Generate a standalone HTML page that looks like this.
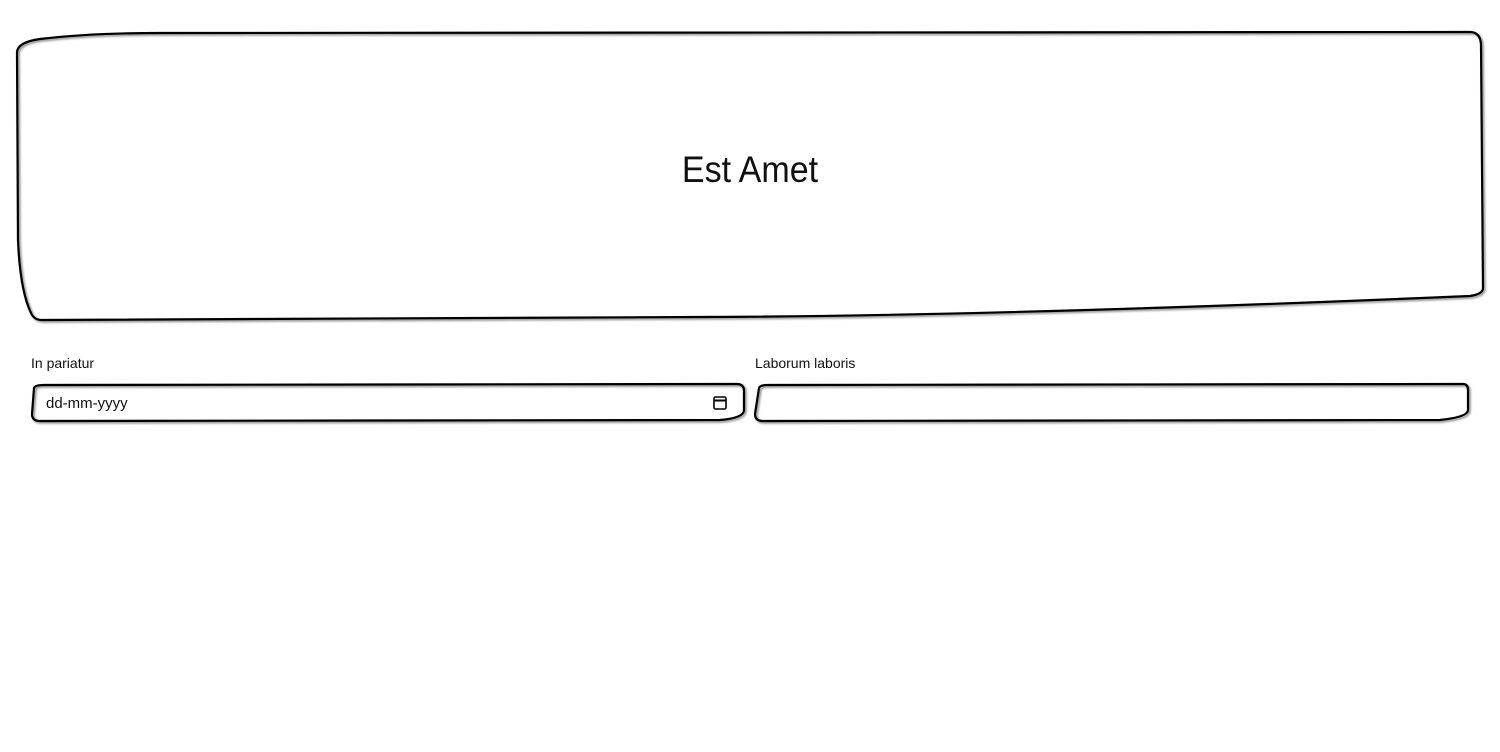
<!DOCTYPE html>
<html><head><style>
body{margin:0;width:1500px;height:752px;background:#fff;font-family:"Comic Sans MS","Liberation Sans",sans-serif;position:relative;overflow:hidden}
svg{position:absolute;left:0;top:0}
.t{position:absolute;color:#111}
</style></head><body>
<svg width="1500" height="752">
<defs><filter id="s"><feGaussianBlur stdDeviation="1"/></filter></defs>
<g fill="none" stroke="#000" stroke-width="2.2" id="g">
<path d="M17,52 Q18,42 40,39 Q90,33 160,33 L1470,32 Q1480,32 1481,44 L1483,288 Q1483,294 1470,296 Q1000,316 700,317 L42,320 Q34,320 31,313 Q20,290 18,240 Z"/>
<path d="M34,388 Q35,385 44,385 L737,384 Q744,384 744,391 L744,410 Q744,418 720,420 L40,421 Q32,421 32,414 Z"/>
<path d="M759,388 Q760,385 768,385 L1463,384 Q1468,384 1468,390 L1468,410 Q1468,417 1440,420 L763,421 Q755,421 755,414 Z"/>
</g>
<use href="#g" x="1.5" y="1.5" filter="url(#s)" opacity="0.5"/>
<rect x="714" y="397" width="12" height="12" rx="1.5" fill="none" stroke="#000" stroke-width="1.6"/>
<line x1="714" y1="400.5" x2="726" y2="400.5" stroke="#000" stroke-width="2"/>
</svg>
<div class="t" style="left:0;width:1500px;top:149px;text-align:center;font-size:37px;transform:scaleX(0.92)">Est Amet</div>
<div class="t" style="left:31px;top:355px;font-size:14px">In pariatur</div>
<div class="t" style="left:755px;top:355px;font-size:14px">Laborum laboris</div>
<div class="t" style="left:46px;top:395px;font-size:15px">dd-mm-yyyy</div>
</body></html>
